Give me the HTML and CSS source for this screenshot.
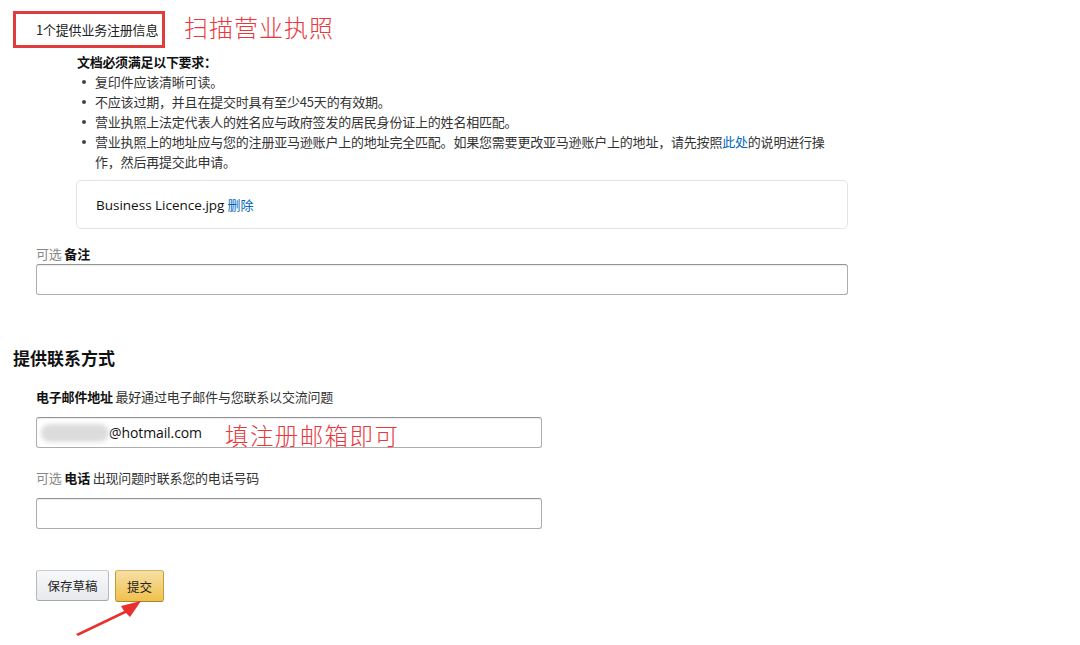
FILE: index.html
```html
<!DOCTYPE html>
<html lang="zh-CN">
<head>
<meta charset="utf-8">
<title>提供业务注册信息</title>
<link rel="stylesheet" href="styles.css">
</head>
<body>
<div class="page">
  <div class="header">
    <div class="tag">1个提供业务注册信息</div>
    <div class="note note-title">扫描营业执照</div>
  </div>

  <div class="requirements">
    <div class="req-title">文档必须满足以下要求：</div>
    <ul class="req-list">
      <li>复印件应该清晰可读。</li>
      <li>不应该过期，并且在提交时具有至少45天的有效期。</li>
      <li>营业执照上法定代表人的姓名应与政府签发的居民身份证上的姓名相匹配。</li>
      <li>营业执照上的地址应与您的注册亚马逊账户上的地址完全匹配。如果您需要更改亚马逊账户上的地址，请先按照<a class="link">此处</a>的说明进行操作，然后再提交此申请。</li>
    </ul>
  </div>

  <div class="file-box">
    <span class="file-name">Business Licence.jpg</span> <a class="link">删除</a>
  </div>

  <div class="field field-remark">
    <div class="label"><span class="opt">可选</span> <b>备注</b></div>
    <div class="input input-wide"></div>
  </div>

  <h2 class="section-title">提供联系方式</h2>

  <div class="field field-email">
    <div class="label"><b>电子邮件地址</b> 最好通过电子邮件与您联系以交流问题</div>
    <div class="input input-mid email-input">
      <span class="blur"></span><span class="email-text">@hotmail.com</span>
      <span class="note note-email">填注册邮箱即可</span>
    </div>
  </div>

  <div class="field field-phone">
    <div class="label"><span class="opt">可选</span> <b>电话</b> 出现问题时联系您的电话号码</div>
    <div class="input input-mid"></div>
  </div>

  <div class="actions">
    <button class="btn btn-draft">保存草稿</button>
    <button class="btn btn-submit">提交</button>
  </div>

  <svg class="arrow" width="80" height="50" viewBox="0 0 80 50">
    <polygon points="2,42 50,19 47,14 67,9 56,25 52,21 4,44" fill="#e8302f"/>
  </svg>
</div>
</body>
</html>
```

FILE: styles.css
```css
* { box-sizing: border-box; }
html, body { margin: 0; padding: 0; background: #fff; }
body {
  font-family: "Noto Sans CJK SC", "Noto Sans", sans-serif;
  font-size: 12px;
  color: #222;
  width: 1080px;
  height: 645px;
  overflow: hidden;
}
.page { position: relative; height: 645px; }

.header {
  display: flex;
  align-items: center;
  padding-top: 11px;
  padding-left: 13px;
}
.tag {
  width: 152px;
  height: 37px;
  border: 3px solid #e23b3b;
  padding-left: 20px;
  line-height: 31px;
  font-size: 13px;
  color: #222;
  letter-spacing: -0.2px;
}
.note {
  color: #e8383d;
  font-family: "Noto Sans CJK SC", sans-serif;
  font-weight: 300;
}
.note-title {
  margin-left: 19px;
  font-size: 24px;
  letter-spacing: 1px;
  line-height: 30px;
  margin-top: -6px;
}

.requirements {
  margin: 4px 0 0 77px;
  width: 764px;
}
.req-title {
  font-weight: bold;
  font-size: 13px;
  line-height: 20px;
  color: #111;
  letter-spacing: -0.3px;
}
.req-list {
  margin: 0;
  padding: 0 0 0 18px;
  list-style: none;
  color: #333;
  font-size: 13px;
  line-height: 20px;
}
.req-list li { position: relative; letter-spacing: -0.2px; }
.req-list li::before {
  content: "";
  position: absolute;
  left: -13px;
  top: 8px;
  width: 4px;
  height: 4px;
  border-radius: 50%;
  background: #444;
}
.link { color: #0066c0; text-decoration: none; }

.file-box {
  margin: 8px 0 0 76px;
  width: 772px;
  height: 49px;
  border: 1px solid #e3e3e3;
  border-radius: 5px;
  padding-left: 19px;
  line-height: 47px;
  font-size: 13px;
  color: #111;
}
.file-name { font-family: "Open Sans", "Noto Sans", sans-serif; font-size: 13.5px; }

.field { margin-left: 36px; }
.field-remark { margin-top: 15px; }
.label {
  line-height: 20px;
  font-size: 13px;
  color: #333;
  letter-spacing: -0.2px;
}
.label b { color: #111; font-weight: bold; font-size: 13px; }
.opt { color: #888; }
.input {
  height: 31px;
  border: 1px solid #adadad;
  border-top-color: #949494;
  border-radius: 3px;
  box-shadow: 0 1px 0 rgba(0,0,0,.07) inset;
  background: #fff;
}
.input-wide { width: 812px; }
.input-mid { width: 506px; }

.section-title {
  margin: 51px 0 0 13px;
  font-size: 17px;
  line-height: 24px;
  font-weight: bold;
  color: #111;
}

.field-email { margin-top: 17px; }
.field-email .input { margin-top: 10px; }
.email-input {
  position: relative;
  display: flex;
  align-items: center;
  padding-left: 4px;
}
.blur {
  width: 68px;
  height: 18px;
  border-radius: 9px;
  background: #dcdcdc;
  filter: blur(2px);
}
.email-text {
  font-family: "Open Sans", "Noto Sans", sans-serif;
  font-size: 14px;
  color: #111;
  letter-spacing: -0.1px;
}
.note-email {
  position: absolute;
  left: 188px;
  top: 2px;
  font-size: 23.5px;
  line-height: 30px;
  letter-spacing: 1.4px;
}

.field-phone { margin-top: 20px; }
.field-phone .input { margin-top: 10px; }

.actions {
  margin: 41px 0 0 36px;
  display: flex;
  gap: 6px;
}
.btn {
  height: 31px;
  border-radius: 3px;
  font-family: "Noto Sans CJK SC", sans-serif;
  font-size: 12.5px;
  color: #222;
  padding: 0 10px;
  cursor: pointer;
}
.btn-draft {
  width: 73px;
  background: linear-gradient(#f7f8fa, #e7e9ec);
  border: 1px solid #adb1b8;
  border-color: #cacdd2 #b6b9be #a4a7ac;
}
.btn-submit {
  width: 49px;
  height: 32px;
  background: linear-gradient(#f7dfa5, #f0c14b);
  border: 1px solid #c9a245;
  border-color: #d4b35d #c49b3a #a88734;
}

.arrow {
  position: absolute;
  left: 74px;
  top: 592px;
}
```
